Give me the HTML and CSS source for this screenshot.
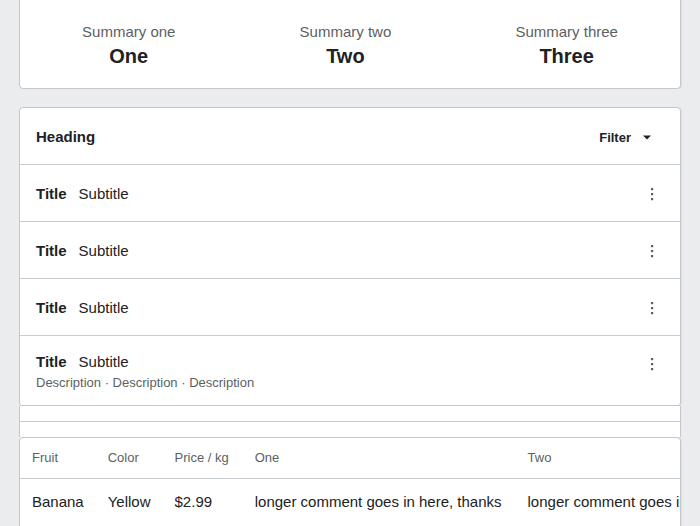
FILE: index.html
```html
<!DOCTYPE html>
<html>
<head>
<meta charset="utf-8">
<link rel="stylesheet" href="styles.css">
</head>
<body>
<div class="page">
  <section class="card summary">
    <div class="stat"><div class="stat-label">Summary one</div><div class="stat-value">One</div></div>
    <div class="stat"><div class="stat-label">Summary two</div><div class="stat-value">Two</div></div>
    <div class="stat"><div class="stat-label">Summary three</div><div class="stat-value">Three</div></div>
  </section>

  <section class="card list">
    <div class="list-head">
      <h2 class="heading">Heading</h2>
      <button class="filter">Filter
        <svg class="caret" width="20" height="20" viewBox="0 0 20 20"><path d="M6 8.5h8l-4 4z" fill="#202223"/></svg>
      </button>
    </div>
    <div class="row">
      <div class="row-main"><span class="title">Title</span><span class="subtitle">Subtitle</span></div>
      <span class="more"><svg width="24" height="20" viewBox="0 0 24 20"><rect x="11" y="4" width="2.2" height="2.2" fill="#5c5f62"/><rect x="11" y="9" width="2.2" height="2.2" fill="#5c5f62"/><rect x="11" y="14" width="2.2" height="2.2" fill="#5c5f62"/></svg></span>
    </div>
    <div class="row">
      <div class="row-main"><span class="title">Title</span><span class="subtitle">Subtitle</span></div>
      <span class="more"><svg width="24" height="20" viewBox="0 0 24 20"><rect x="11" y="4" width="2.2" height="2.2" fill="#5c5f62"/><rect x="11" y="9" width="2.2" height="2.2" fill="#5c5f62"/><rect x="11" y="14" width="2.2" height="2.2" fill="#5c5f62"/></svg></span>
    </div>
    <div class="row">
      <div class="row-main"><span class="title">Title</span><span class="subtitle">Subtitle</span></div>
      <span class="more"><svg width="24" height="20" viewBox="0 0 24 20"><rect x="11" y="4" width="2.2" height="2.2" fill="#5c5f62"/><rect x="11" y="9" width="2.2" height="2.2" fill="#5c5f62"/><rect x="11" y="14" width="2.2" height="2.2" fill="#5c5f62"/></svg></span>
    </div>
    <div class="row row-last">
      <div class="row-body">
        <div class="row-main"><span class="title">Title</span><span class="subtitle">Subtitle</span></div>
        <div class="desc">Description · Description · Description</div>
      </div>
      <span class="more more-top"><svg width="24" height="20" viewBox="0 0 24 20"><rect x="11" y="4" width="2.2" height="2.2" fill="#5c5f62"/><rect x="11" y="9" width="2.2" height="2.2" fill="#5c5f62"/><rect x="11" y="14" width="2.2" height="2.2" fill="#5c5f62"/></svg></span>
    </div>
  </section>

  <div class="strip strip-first"></div>
  <div class="strip"></div>

  <section class="card table-card">
    <table class="data">
      <thead>
        <tr><th>Fruit</th><th>Color</th><th class="c-price">Price / kg</th><th>One</th><th>Two</th></tr>
      </thead>
      <tbody>
        <tr><td>Banana</td><td>Yellow</td><td>$2.99</td><td class="c-one">longer comment goes in here, thanks</td><td>longer comment goes in here, thanks</td></tr>
      </tbody>
    </table>
  </section>
</div>
</body>
</html>
```

FILE: styles.css
```css
* { box-sizing: border-box; }
html, body { margin: 0; padding: 0; }
body {
  background: #ebeced;
  font-family: "Liberation Sans", Arial, Helvetica, sans-serif;
  color: #202223;
  overflow: hidden;
  height: 526px;
}
.page {
  padding: 0 19px;
  margin-top: -4px;
}
.card {
  background: #fff;
  border: 1px solid #c4c6c9;
  border-radius: 4px;
  box-shadow: 1px 0 0 rgba(0,0,0,0.06);
}
.summary {
  display: flex;
  padding: 25px 0 20px;
}
.stat {
  flex: 1 1 auto;
  text-align: center;
}
.stat-label {
  font-size: 15px;
  line-height: 20px;
  color: #5c5f62;
}
.stat-value {
  font-size: 20px;
  font-weight: bold;
  line-height: 24px;
  margin-top: 2px;
}
.list {
  margin-top: 18px;
  border-bottom-left-radius: 3px;
  border-bottom-right-radius: 3px;
}
.list-head {
  display: flex;
  align-items: center;
  justify-content: space-between;
  height: 57px;
  padding: 2px 16px 0;
  border-bottom: 1px solid #c9cccf;
}
.heading {
  margin: 0;
  font-size: 15px;
  font-weight: bold;
  line-height: 20px;
}
.filter {
  display: flex;
  align-items: center;
  gap: 6px;
  background: none;
  border: 0;
  padding: 0;
  margin-right: 7px;
  font-family: inherit;
  font-size: 13px;
  font-weight: bold;
  color: #202223;
}
.caret { display: block; margin-top: -1px; }
.row {
  display: flex;
  align-items: center;
  justify-content: space-between;
  height: 57px;
  padding: 2px 16px 0;
  border-bottom: 1px solid #c9cccf;
}
.row-main {
  display: flex;
  gap: 12px;
  font-size: 15px;
  line-height: 20px;
}
.title { font-weight: bold; }
.more { display: block; width: 24px; height: 20px; }
.more svg { display: block; }
.row-last {
  height: auto;
  align-items: flex-start;
  padding-top: 16px;
  padding-bottom: 14px;
  border-bottom: 0;
}
.more-top { margin-top: 2px; }
.desc {
  font-size: 13px;
  line-height: 17px;
  color: #5c5f62;
  margin-top: 2px;
}
.strip {
  height: 15px;
  background: #fff;
  border-left: 1px solid #c4c6c9;
  border-right: 1px solid #c4c6c9;
}
.strip-first {
  height: 16px;
  border-bottom: 1px solid #c9cccf;
}
.table-card {
  overflow: hidden;
  height: 120px;
}
.data {
  border-collapse: collapse;
  white-space: nowrap;
}
.data th {
  text-align: left;
  font-weight: normal;
  font-size: 13px;
  line-height: 16px;
  color: #5c5f62;
  padding: 12px 12px;
  border-bottom: 1px solid #c9cccf;
}
.data th.c-price { padding-right: 14px; }
.data td {
  font-size: 15px;
  line-height: 20px;
  padding: 13px 12px 11px;
}
.data td.c-one { padding-right: 14px; }
```
